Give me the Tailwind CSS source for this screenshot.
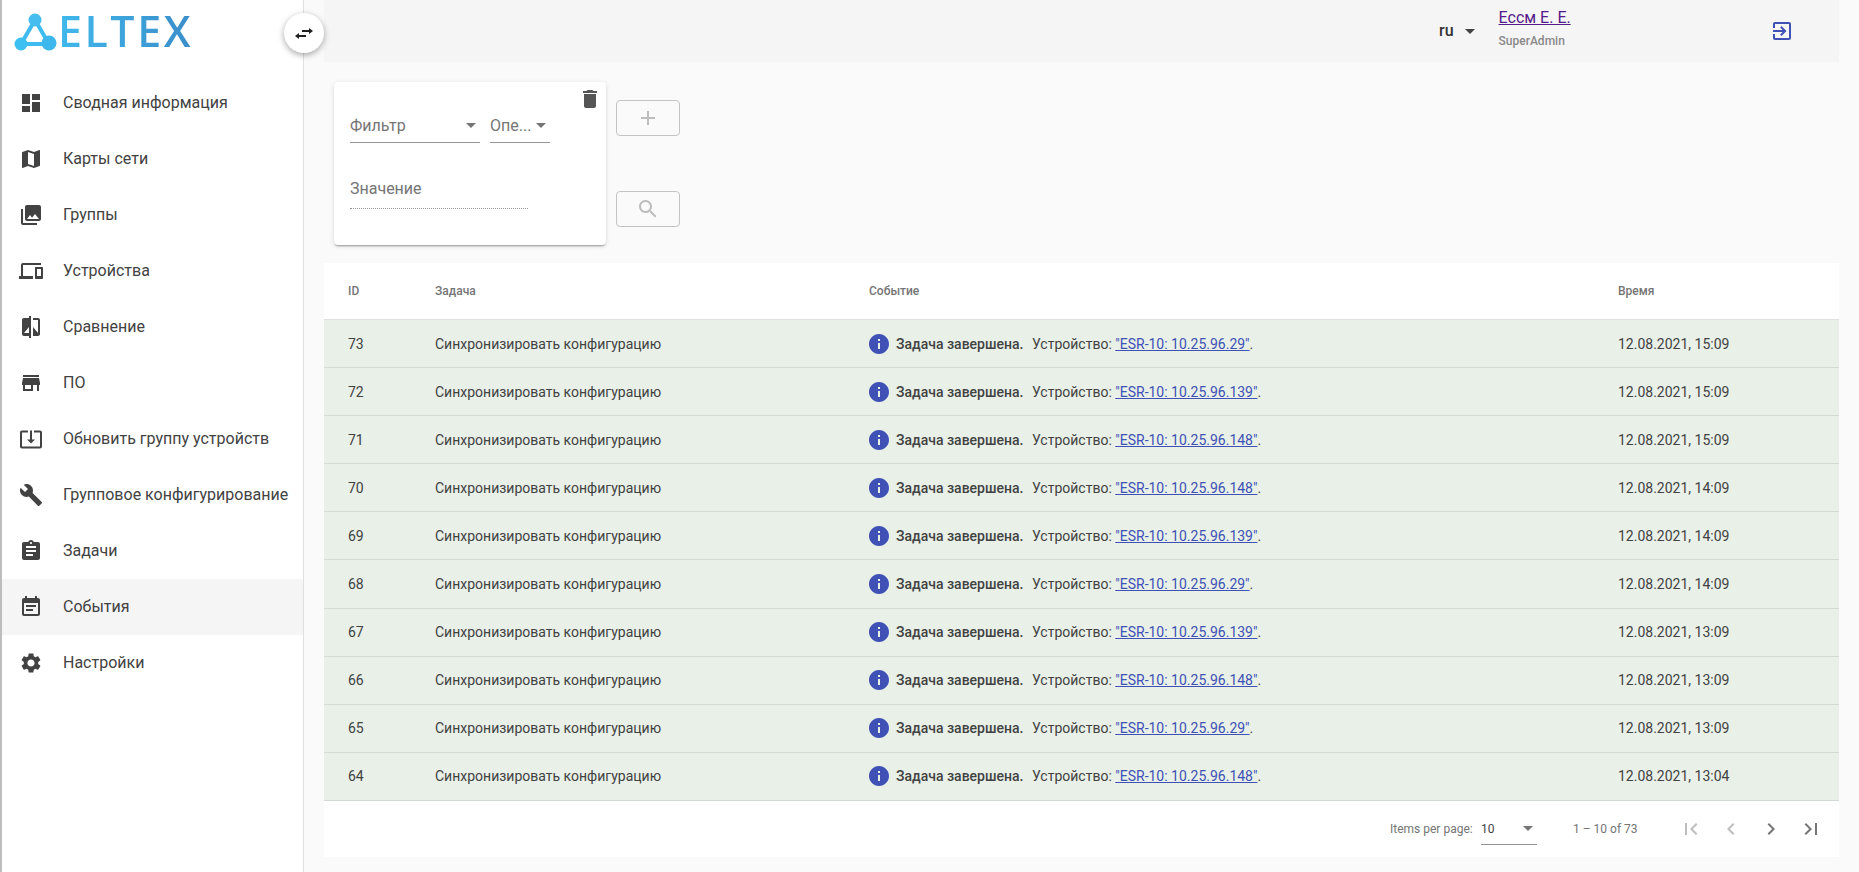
<!DOCTYPE html>
<html lang="ru">
<head>
<meta charset="utf-8">
<script src="https://cdn.jsdelivr.net/npm/@tailwindcss/browser@4"></script>
<title>Eltex</title>
</head>
<body class="font-['Roboto',sans-serif] bg-[#fafafa] text-[#424242]">
<div class="flex h-[872px] w-[1859px] overflow-hidden relative">
  <aside class="w-[304px] h-full bg-white border-l-2 border-l-[#bdbdbd] border-r border-r-[#e0e0e0] shrink-0 flex flex-col">
    <div class="h-[75px] relative">
      <svg class="absolute left-[12px] top-[12px]" width="50" height="42" viewBox="0 0 50 42"><path d="M21 8 7 32h28z" fill="none" stroke="#3fbcef" stroke-width="4"/><circle cx="21" cy="8" r="6.5" fill="#45bdee"/><circle cx="7" cy="32" r="6.5" fill="#3cc0f2"/><circle cx="35" cy="31" r="7.5" fill="#3eb8ec"/></svg>
      <span class="absolute left-[56px] top-[6px] text-[43px] leading-[50px] tracking-[2.5px] font-['Open_Sans',sans-serif] font-semibold bg-gradient-to-r from-[#3fb9ec] to-[#3b8dc9] bg-clip-text text-transparent">ELTEX</span>
    </div>
    <nav class="flex flex-col text-base text-[#424242]">
      <a class="h-[56px] flex items-center"><svg class="ml-[17px] mr-[20px]" width="24" height="24" viewBox="0 0 24 24" fill="#424242"><path d="M3 13h8V3H3v10zm0 8h8v-6H3v6zm10 0h8V11h-8v10zm0-18v6h8V3h-8z"/></svg>Сводная информация</a>
      <a class="h-[56px] flex items-center"><svg class="ml-[17px] mr-[20px]" width="24" height="24" viewBox="0 0 24 24" fill="#424242"><path d="M20.5 3l-.16.03L15 5.1 9 3 3.36 4.9c-.21.07-.36.25-.36.48V20.5c0 .28.22.5.5.5l.16-.03L9 18.9l6 2.1 5.64-1.9c.21-.07.36-.25.36-.48V3.5c0-.28-.22-.5-.5-.5zM15 19l-6-2.11V5l6 2.11V19z"/></svg>Карты сети</a>
      <a class="h-[56px] flex items-center"><svg class="ml-[17px] mr-[20px]" width="24" height="24" viewBox="0 0 24 24" fill="#424242"><path d="M22 16V4c0-1.1-.9-2-2-2H8c-1.1 0-2 .9-2 2v12c0 1.1.9 2 2 2h12c1.1 0 2-.9 2-2zm-11-4l2.03 2.71L16 11l4 5H8l3-4zM2 6v14c0 1.1.9 2 2 2h14v-2H4V6H2z"/></svg>Группы</a>
      <a class="h-[56px] flex items-center"><svg class="ml-[17px] mr-[20px]" width="24" height="24" viewBox="0 0 24 24" fill="#424242"><path d="M4 6h18V4H4c-1.1 0-2 .9-2 2v11H0v3h14v-3H4V6zm19 2h-6c-.55 0-1 .45-1 1v10c0 .55.45 1 1 1h6c.55 0 1-.45 1-1V9c0-.55-.45-1-1-1zm-1 9h-4v-7h4v7z"/></svg>Устройства</a>
      <a class="h-[56px] flex items-center"><svg class="ml-[17px] mr-[20px]" width="24" height="24" viewBox="0 0 24 24" fill="#424242"><path d="M10 3H5c-1.1 0-2 .9-2 2v14c0 1.1.9 2 2 2h5v2h2V1h-2v2zm0 15H5l5-6v6zm9-15h-5v2h5v13l-5-6v9h5c1.1 0 2-.9 2-2V5c0-1.1-.9-2-2-2z"/></svg>Сравнение</a>
      <a class="h-[56px] flex items-center"><svg class="ml-[17px] mr-[20px]" width="24" height="24" viewBox="0 0 24 24" fill="#424242"><path d="M20 4H4v2h16V4zm1 10v-2l-1-5H4l-1 5v2h1v6h10v-6h4v6h2v-6h1zm-9 4H6v-4h6v4z"/></svg>ПО</a>
      <a class="h-[56px] flex items-center"><svg class="ml-[17px] mr-[20px]" width="24" height="24" viewBox="0 0 24 24" fill="#424242"><path d="M12 16.5l4-4h-3v-9h-2v9H8l4 4zm9-13h-6v1.99h6v14.03H3V5.49h6V3.5H3c-1.1 0-2 .9-2 2v14c0 1.1.9 2 2 2h18c1.1 0 2-.9 2-2v-14c0-1.1-.9-2-2-2z"/></svg>Обновить группу устройств</a>
      <a class="h-[56px] flex items-center"><svg class="ml-[17px] mr-[20px]" width="24" height="24" viewBox="0 0 24 24" fill="#424242"><path d="M22.7 19l-9.1-9.1c.9-2.3.4-5-1.5-6.9-2-2-5-2.4-7.4-1.3L9 6 6 9 1.6 4.7C.4 7.1.9 10.1 2.9 12.1c1.9 1.9 4.6 2.4 6.9 1.5l9.1 9.1c.4.4 1 .4 1.4 0l2.3-2.3c.5-.4.5-1.1.1-1.4z"/></svg>Групповое конфигурирование</a>
      <a class="h-[56px] flex items-center"><svg class="ml-[17px] mr-[20px]" width="24" height="24" viewBox="0 0 24 24" fill="#424242"><path d="M19 3h-4.18C14.4 1.84 13.3 1 12 1c-1.3 0-2.4.84-2.82 2H5c-1.1 0-2 .9-2 2v14c0 1.1.9 2 2 2h14c1.1 0 2-.9 2-2V5c0-1.1-.9-2-2-2zm-7 0c.55 0 1 .45 1 1s-.45 1-1 1-1-.45-1-1 .45-1 1-1zm2 14H7v-2h7v2zm3-4H7v-2h10v2zm0-4H7V7h10v2z"/></svg>Задачи</a>
      <a class="h-[56px] flex items-center bg-[#f5f5f5]"><svg class="ml-[17px] mr-[20px]" width="24" height="24" viewBox="0 0 24 24" fill="#424242"><path d="M17 10H7v2h10v-2zm2-7h-1V1h-2v2H8V1H6v2H5c-1.11 0-1.99.9-1.99 2L3 19c0 1.1.89 2 2 2h14c1.1 0 2-.9 2-2V5c0-1.1-.9-2-2-2zm0 16H5V8h14v11zm-5-5H7v2h7v-2z"/></svg>События</a>
      <a class="h-[56px] flex items-center"><svg class="ml-[17px] mr-[20px]" width="24" height="24" viewBox="0 0 24 24" fill="#424242"><path d="M19.14 12.94c.04-.3.06-.61.06-.94 0-.32-.02-.64-.07-.94l2.03-1.58c.18-.14.23-.41.12-.61l-1.92-3.32c-.12-.22-.37-.29-.59-.22l-2.39.96c-.5-.38-1.03-.7-1.62-.94l-.36-2.54c-.04-.24-.24-.41-.48-.41h-3.84c-.24 0-.43.17-.47.41l-.36 2.54c-.59.24-1.13.57-1.62.94l-2.39-.96c-.22-.08-.47 0-.59.22L2.74 8.87c-.12.21-.08.47.12.61l2.03 1.58c-.05.3-.09.63-.09.94s.02.64.07.94l-2.03 1.58c-.18.14-.23.41-.12.61l1.92 3.32c.12.22.37.29.59.22l2.39-.96c.5.38 1.03.7 1.62.94l.36 2.54c.05.24.24.41.48.41h3.84c.24 0 .44-.17.47-.41l.36-2.54c.59-.24 1.13-.56 1.62-.94l2.39.96c.22.08.47 0 .59-.22l1.92-3.32c.12-.22.07-.47-.12-.61l-2.01-1.58zM12 15.6c-1.98 0-3.6-1.62-3.6-3.6s1.62-3.6 3.6-3.6 3.6 1.62 3.6 3.6-1.62 3.6-3.6 3.6z"/></svg>Настройки</a>
    </nav>
  </aside>

  <button class="absolute left-[284px] top-[13px] w-10 h-10 rounded-full bg-white shadow-[0_2px_6px_rgba(0,0,0,0.35)] flex items-center justify-center z-10">
    <svg width="24" height="24" viewBox="0 0 24 24" fill="#212121"><path d="M6.99 12L3 15l3.99 3v-2H14v-2H6.99zM21 10l-3.99-3v2H10v2h7.01v2z"/></svg>
  </button>

  <main class="flex-1 flex flex-col pl-[20px] pr-[20px] min-w-0">
    <header class="h-[62px] shrink-0 bg-[#f5f5f5] flex items-center">
      <span class="ml-[1115px] text-base font-medium text-[#333]">ru</span>
      <span class="ml-[11px] w-0 h-0 border-x-[5px] border-x-transparent border-t-[5px] border-t-[#424242]"></span>
      <div class="ml-[24px] flex flex-col h-full pt-[8px]">
        <a class="text-base leading-[19px] underline text-[#551a8b]">Ессм Е. Е.</a>
        <span class="mt-[7px] text-xs font-medium text-[#8a8a8a] leading-[14px]">SuperAdmin</span>
      </div>
      <svg class="ml-[199px]" width="24" height="24" viewBox="0 0 24 24" fill="#3f51b5"><path d="M10.09 15.59L11.5 17l5-5-5-5-1.41 1.41L12.67 11H3v2h9.67l-2.58 2.59zM19 3H5c-1.11 0-2 .9-2 2v4h2V5h14v14H5v-4H3v4c0 1.1.89 2 2 2h14c1.1 0 2-.9 2-2V5c0-1.1-.9-2-2-2z"/></svg>
    </header>

    <section class="h-[201px] shrink-0 flex pl-[10px] pt-[20px]">
      <div class="w-[272px] h-[163px] bg-white rounded shadow-[0_2px_2px_-1px_rgba(0,0,0,0.35),0_1px_5px_rgba(0,0,0,0.12)] relative pl-[16px]">
        <svg class="absolute right-[4px] top-[5px]" width="24" height="24" viewBox="0 0 24 24" fill="#555"><path d="M6 19c0 1.1.9 2 2 2h8c1.1 0 2-.9 2-2V7H6v12zM19 4h-3.5l-1-1h-5l-1 1H5v2h14V4z"/></svg>
        <div class="flex gap-[10px] pt-[29px]">
          <div class="w-[130px] h-[32px] border-b border-b-[#949494] flex items-center justify-between pr-[4px] text-base text-[#757575] pb-[2px]">Фильтр<span class="w-0 h-0 border-x-[5px] border-x-transparent border-t-[5px] border-t-[#757575]"></span></div>
          <div class="w-[60px] h-[32px] border-b border-b-[#949494] flex items-center justify-between pr-[4px] text-base text-[#757575] pb-[2px]">Опе...<span class="w-0 h-0 border-x-[5px] border-x-transparent border-t-[5px] border-t-[#757575]"></span></div>
        </div>
        <div class="mt-[33px] w-[178px] h-[33px] border-b border-dotted border-b-[#949494] text-base text-[#757575] leading-[19px] pt-[3px]">Значение</div>
      </div>
      <div class="ml-[10px] flex flex-col pt-[18px] gap-[55px]">
        <button class="w-[64px] h-[36px] border border-[#c4c4c4] rounded flex items-center justify-center"><svg width="24" height="24" viewBox="0 0 24 24" fill="#bdbdbd"><path d="M19 13h-6v6h-2v-6H5v-2h6V5h2v6h6v2z"/></svg></button>
        <button class="w-[64px] h-[36px] border border-[#c4c4c4] rounded flex items-center justify-center"><svg width="24" height="24" viewBox="0 0 24 24" fill="#bdbdbd"><path d="M15.5 14h-.79l-.28-.27C15.41 12.59 16 11.11 16 9.5 16 5.91 13.09 3 9.5 3S3 5.91 3 9.5 5.91 16 9.5 16c1.61 0 3.09-.59 4.23-1.57l.27.28v.79l5 4.99L20.49 19l-4.99-5zm-6 0C7.01 14 5 11.99 5 9.5S7.01 5 9.5 5 14 7.01 14 9.5 11.99 14 9.5 14z"/></svg></button>
      </div>
    </section>

    <section class="bg-white w-[1515px]">
      <div class="grid grid-cols-[111px_434px_749px_221px] h-[57px] items-center text-xs font-medium text-[#757575] border-b border-b-[#e0e0e0] pb-[1px]">
        <div class="pl-[24px]">ID</div><div>Задача</div><div>Событие</div><div>Время</div>
      </div>
      <div class="grid grid-cols-[111px_434px_749px_221px] h-[48.1px] items-center text-sm bg-[#e8f0e8] border-b border-b-[#d3dad3] text-[#424242]">
        <div class="pl-[24px]">73</div><div>Синхронизировать конфигурацию</div>
        <div class="flex items-center -ml-[2px]"><svg class="mr-[5px]" width="24" height="24" viewBox="0 0 24 24" fill="#3f51b5"><path d="M12 2C6.48 2 2 6.48 2 12s4.48 10 10 10 10-4.48 10-10S17.52 2 12 2zm1 15h-2v-6h2v6zm0-8h-2V7h2v2z"/></svg><b class="font-medium w-[136px] whitespace-pre">Задача завершена. </b><span>Устройство:&nbsp;</span><a class="text-[#3f51b5] underline">"ESR-10: 10.25.96.29"</a>.</div>
        <div>12.08.2021, 15:09</div>
      </div>
      <div class="grid grid-cols-[111px_434px_749px_221px] h-[48.1px] items-center text-sm bg-[#e8f0e8] border-b border-b-[#d3dad3] text-[#424242]">
        <div class="pl-[24px]">72</div><div>Синхронизировать конфигурацию</div>
        <div class="flex items-center -ml-[2px]"><svg class="mr-[5px]" width="24" height="24" viewBox="0 0 24 24" fill="#3f51b5"><path d="M12 2C6.48 2 2 6.48 2 12s4.48 10 10 10 10-4.48 10-10S17.52 2 12 2zm1 15h-2v-6h2v6zm0-8h-2V7h2v2z"/></svg><b class="font-medium w-[136px] whitespace-pre">Задача завершена. </b><span>Устройство:&nbsp;</span><a class="text-[#3f51b5] underline">"ESR-10: 10.25.96.139"</a>.</div>
        <div>12.08.2021, 15:09</div>
      </div>
      <div class="grid grid-cols-[111px_434px_749px_221px] h-[48.1px] items-center text-sm bg-[#e8f0e8] border-b border-b-[#d3dad3] text-[#424242]">
        <div class="pl-[24px]">71</div><div>Синхронизировать конфигурацию</div>
        <div class="flex items-center -ml-[2px]"><svg class="mr-[5px]" width="24" height="24" viewBox="0 0 24 24" fill="#3f51b5"><path d="M12 2C6.48 2 2 6.48 2 12s4.48 10 10 10 10-4.48 10-10S17.52 2 12 2zm1 15h-2v-6h2v6zm0-8h-2V7h2v2z"/></svg><b class="font-medium w-[136px] whitespace-pre">Задача завершена. </b><span>Устройство:&nbsp;</span><a class="text-[#3f51b5] underline">"ESR-10: 10.25.96.148"</a>.</div>
        <div>12.08.2021, 15:09</div>
      </div>
      <div class="grid grid-cols-[111px_434px_749px_221px] h-[48.1px] items-center text-sm bg-[#e8f0e8] border-b border-b-[#d3dad3] text-[#424242]">
        <div class="pl-[24px]">70</div><div>Синхронизировать конфигурацию</div>
        <div class="flex items-center -ml-[2px]"><svg class="mr-[5px]" width="24" height="24" viewBox="0 0 24 24" fill="#3f51b5"><path d="M12 2C6.48 2 2 6.48 2 12s4.48 10 10 10 10-4.48 10-10S17.52 2 12 2zm1 15h-2v-6h2v6zm0-8h-2V7h2v2z"/></svg><b class="font-medium w-[136px] whitespace-pre">Задача завершена. </b><span>Устройство:&nbsp;</span><a class="text-[#3f51b5] underline">"ESR-10: 10.25.96.148"</a>.</div>
        <div>12.08.2021, 14:09</div>
      </div>
      <div class="grid grid-cols-[111px_434px_749px_221px] h-[48.1px] items-center text-sm bg-[#e8f0e8] border-b border-b-[#d3dad3] text-[#424242]">
        <div class="pl-[24px]">69</div><div>Синхронизировать конфигурацию</div>
        <div class="flex items-center -ml-[2px]"><svg class="mr-[5px]" width="24" height="24" viewBox="0 0 24 24" fill="#3f51b5"><path d="M12 2C6.48 2 2 6.48 2 12s4.48 10 10 10 10-4.48 10-10S17.52 2 12 2zm1 15h-2v-6h2v6zm0-8h-2V7h2v2z"/></svg><b class="font-medium w-[136px] whitespace-pre">Задача завершена. </b><span>Устройство:&nbsp;</span><a class="text-[#3f51b5] underline">"ESR-10: 10.25.96.139"</a>.</div>
        <div>12.08.2021, 14:09</div>
      </div>
      <div class="grid grid-cols-[111px_434px_749px_221px] h-[48.1px] items-center text-sm bg-[#e8f0e8] border-b border-b-[#d3dad3] text-[#424242]">
        <div class="pl-[24px]">68</div><div>Синхронизировать конфигурацию</div>
        <div class="flex items-center -ml-[2px]"><svg class="mr-[5px]" width="24" height="24" viewBox="0 0 24 24" fill="#3f51b5"><path d="M12 2C6.48 2 2 6.48 2 12s4.48 10 10 10 10-4.48 10-10S17.52 2 12 2zm1 15h-2v-6h2v6zm0-8h-2V7h2v2z"/></svg><b class="font-medium w-[136px] whitespace-pre">Задача завершена. </b><span>Устройство:&nbsp;</span><a class="text-[#3f51b5] underline">"ESR-10: 10.25.96.29"</a>.</div>
        <div>12.08.2021, 14:09</div>
      </div>
      <div class="grid grid-cols-[111px_434px_749px_221px] h-[48.1px] items-center text-sm bg-[#e8f0e8] border-b border-b-[#d3dad3] text-[#424242]">
        <div class="pl-[24px]">67</div><div>Синхронизировать конфигурацию</div>
        <div class="flex items-center -ml-[2px]"><svg class="mr-[5px]" width="24" height="24" viewBox="0 0 24 24" fill="#3f51b5"><path d="M12 2C6.48 2 2 6.48 2 12s4.48 10 10 10 10-4.48 10-10S17.52 2 12 2zm1 15h-2v-6h2v6zm0-8h-2V7h2v2z"/></svg><b class="font-medium w-[136px] whitespace-pre">Задача завершена. </b><span>Устройство:&nbsp;</span><a class="text-[#3f51b5] underline">"ESR-10: 10.25.96.139"</a>.</div>
        <div>12.08.2021, 13:09</div>
      </div>
      <div class="grid grid-cols-[111px_434px_749px_221px] h-[48.1px] items-center text-sm bg-[#e8f0e8] border-b border-b-[#d3dad3] text-[#424242]">
        <div class="pl-[24px]">66</div><div>Синхронизировать конфигурацию</div>
        <div class="flex items-center -ml-[2px]"><svg class="mr-[5px]" width="24" height="24" viewBox="0 0 24 24" fill="#3f51b5"><path d="M12 2C6.48 2 2 6.48 2 12s4.48 10 10 10 10-4.48 10-10S17.52 2 12 2zm1 15h-2v-6h2v6zm0-8h-2V7h2v2z"/></svg><b class="font-medium w-[136px] whitespace-pre">Задача завершена. </b><span>Устройство:&nbsp;</span><a class="text-[#3f51b5] underline">"ESR-10: 10.25.96.148"</a>.</div>
        <div>12.08.2021, 13:09</div>
      </div>
      <div class="grid grid-cols-[111px_434px_749px_221px] h-[48.1px] items-center text-sm bg-[#e8f0e8] border-b border-b-[#d3dad3] text-[#424242]">
        <div class="pl-[24px]">65</div><div>Синхронизировать конфигурацию</div>
        <div class="flex items-center -ml-[2px]"><svg class="mr-[5px]" width="24" height="24" viewBox="0 0 24 24" fill="#3f51b5"><path d="M12 2C6.48 2 2 6.48 2 12s4.48 10 10 10 10-4.48 10-10S17.52 2 12 2zm1 15h-2v-6h2v6zm0-8h-2V7h2v2z"/></svg><b class="font-medium w-[136px] whitespace-pre">Задача завершена. </b><span>Устройство:&nbsp;</span><a class="text-[#3f51b5] underline">"ESR-10: 10.25.96.29"</a>.</div>
        <div>12.08.2021, 13:09</div>
      </div>
      <div class="grid grid-cols-[111px_434px_749px_221px] h-[48.1px] items-center text-sm bg-[#e8f0e8] border-b border-b-[#d3dad3] text-[#424242]">
        <div class="pl-[24px]">64</div><div>Синхронизировать конфигурацию</div>
        <div class="flex items-center -ml-[2px]"><svg class="mr-[5px]" width="24" height="24" viewBox="0 0 24 24" fill="#3f51b5"><path d="M12 2C6.48 2 2 6.48 2 12s4.48 10 10 10 10-4.48 10-10S17.52 2 12 2zm1 15h-2v-6h2v6zm0-8h-2V7h2v2z"/></svg><b class="font-medium w-[136px] whitespace-pre">Задача завершена. </b><span>Устройство:&nbsp;</span><a class="text-[#3f51b5] underline">"ESR-10: 10.25.96.148"</a>.</div>
        <div>12.08.2021, 13:04</div>
      </div>
      <div class="h-[56px] flex items-center text-xs text-[#757575] pl-[1066px]">
        <span class="w-[91px]">Items per page:</span>
        <div class="w-[56px] h-[32px] border-b border-b-[#949494] flex items-center justify-between pr-[4px] text-[#424242] pt-[1px]">10<span class="w-0 h-0 border-x-[5px] border-x-transparent border-t-[5px] border-t-[#757575]"></span></div>
        <span class="ml-[36px] w-[98px]">1 – 10 of 73</span>
        <div class="flex">
          <svg class="p-[8px]" width="40" height="40" viewBox="0 0 24 24" fill="#bdbdbd"><path d="M18.41 16.59L13.82 12l4.59-4.59L17 6l-6 6 6 6zM6 6h2v12H6z"/></svg>
          <svg class="p-[8px]" width="40" height="40" viewBox="0 0 24 24" fill="#bdbdbd"><path d="M15.41 7.41L14 6l-6 6 6 6 1.41-1.41L10.83 12z"/></svg>
          <svg class="p-[8px]" width="40" height="40" viewBox="0 0 24 24" fill="#757575"><path d="M10 6L8.59 7.41 13.17 12l-4.58 4.59L10 18l6-6z"/></svg>
          <svg class="p-[8px]" width="40" height="40" viewBox="0 0 24 24" fill="#757575"><path d="M5.59 7.41L10.18 12l-4.59 4.59L7 18l6-6-6-6zM16 6h2v12h-2z"/></svg>
        </div>
      </div>
    </section>
  </main>
</div>
</body>
</html>
